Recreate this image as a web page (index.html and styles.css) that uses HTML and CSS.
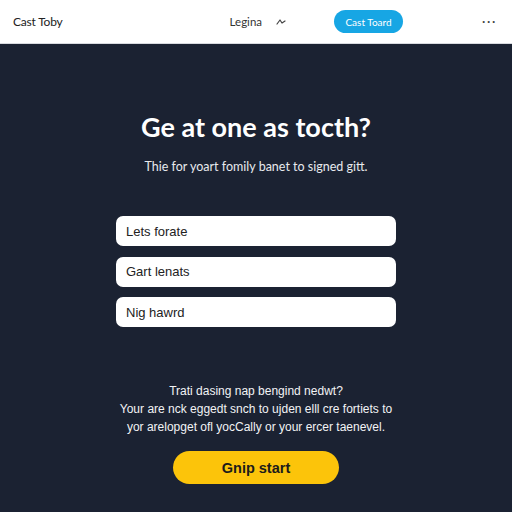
FILE: index.html
```html
<!DOCTYPE html>
<html lang="en">
<head>
    <meta charset="UTF-8">
    <title>Cast Toby</title>
    <link rel="stylesheet" href="styles.css">
</head>
<body>
    <header class="topbar">
        <div class="logo">Cast Toby</div>
        <nav class="nav">
            <a class="nav-link" href="#">Legina</a>
            <svg class="chev" width="10" height="8" viewBox="0 0 10 8">
                <path d="M1 6 L4 2 L6 5 L9 3" fill="none" stroke="#444" stroke-width="1.2" stroke-linecap="round" stroke-linejoin="round"/>
            </svg>
            <button class="nav-btn">Cast Toard</button>
        </nav>
        <div class="dots">&middot;&middot;&middot;</div>
    </header>

    <main class="hero">
        <h1>Ge at one as tocth?</h1>
        <p class="lead">Thie for yoart fomily banet to signed gitt.</p>

        <form class="fields">
            <input type="text" value="Lets forate">
            <input type="text" value="Gart lenats">
            <input type="text" value="Nig hawrd">
        </form>

        <p class="note">
            Trati dasing nap bengind nedwt?<br>
            Your are nck eggedt snch to ujden elll cre fortiets to<br>
            yor arelopget ofl yocCally or your ercer taenevel.
        </p>

        <button class="start">Gnip start</button>
    </main>
</body>
</html>
```

FILE: styles.css
```css
* {
    box-sizing: border-box;
}
html, body {
    margin: 0;
    height: 100%;
}
body {
    background-color: #1b2232;
    font-family: "Liberation Sans", Arial, sans-serif;
    display: flex;
    flex-direction: column;
}
.topbar {
    height: 44px;
    background-color: #ffffff;
    border-bottom: 1px solid #d8dadf;
    display: flex;
    align-items: center;
    padding: 0 13px;
}
.logo {
    font-family: "Lato", sans-serif;
    font-size: 12px;
    color: #222;
    letter-spacing: -0.2px;
}
.nav {
    display: flex;
    align-items: center;
    margin-left: 167px;
}
.nav-link {
    font-family: "Lato", sans-serif;
    font-size: 11.5px;
    color: #333;
    text-decoration: none;
}
.chev {
    margin-left: 14px;
}
.nav-btn {
    margin-left: 48px;
    width: 69px;
    height: 23px;
    border: none;
    border-radius: 12px;
    background-color: #17a6e4;
    color: #fff;
    font-family: "Lato", sans-serif;
    font-size: 10px;
    padding: 0;
}
.dots {
    margin-left: auto;
    margin-right: 2px;
    font-size: 12px;
    color: #444;
    letter-spacing: 1px;
    font-weight: bold;
}
.hero {
    flex: 1;
    display: flex;
    flex-direction: column;
    align-items: center;
    padding-top: 68px;
    color: #fff;
}
h1 {
    margin: 0;
    font-family: "Lato", sans-serif;
    font-weight: 700;
    font-size: 27px;
    line-height: 30px;
}
.lead {
    margin: 16px 0 0 0;
    font-family: "Lato", sans-serif;
    font-size: 12.5px;
    line-height: 18px;
    color: #e8eaee;
}
.fields {
    margin-top: 40px;
    display: flex;
    flex-direction: column;
    gap: 10.5px;
    width: 280px;
}
.fields input {
    height: 30px;
    border: none;
    border-radius: 7px;
    background-color: #fff;
    padding: 0 10px;
    font-family: "Liberation Sans", Arial, sans-serif;
    font-size: 13px;
    color: #222;
}
.note {
    margin: 55px 0 0 0;
    text-align: center;
    font-size: 12px;
    line-height: 18px;
    color: #f2f3f5;
}
.start {
    margin-top: 15px;
    width: 166px;
    height: 33px;
    border: none;
    border-radius: 17px;
    background-color: #fcc40a;
    color: #1b1b1b;
    font-family: "Liberation Sans", Arial, sans-serif;
    font-weight: bold;
    font-size: 14.5px;
}
```
